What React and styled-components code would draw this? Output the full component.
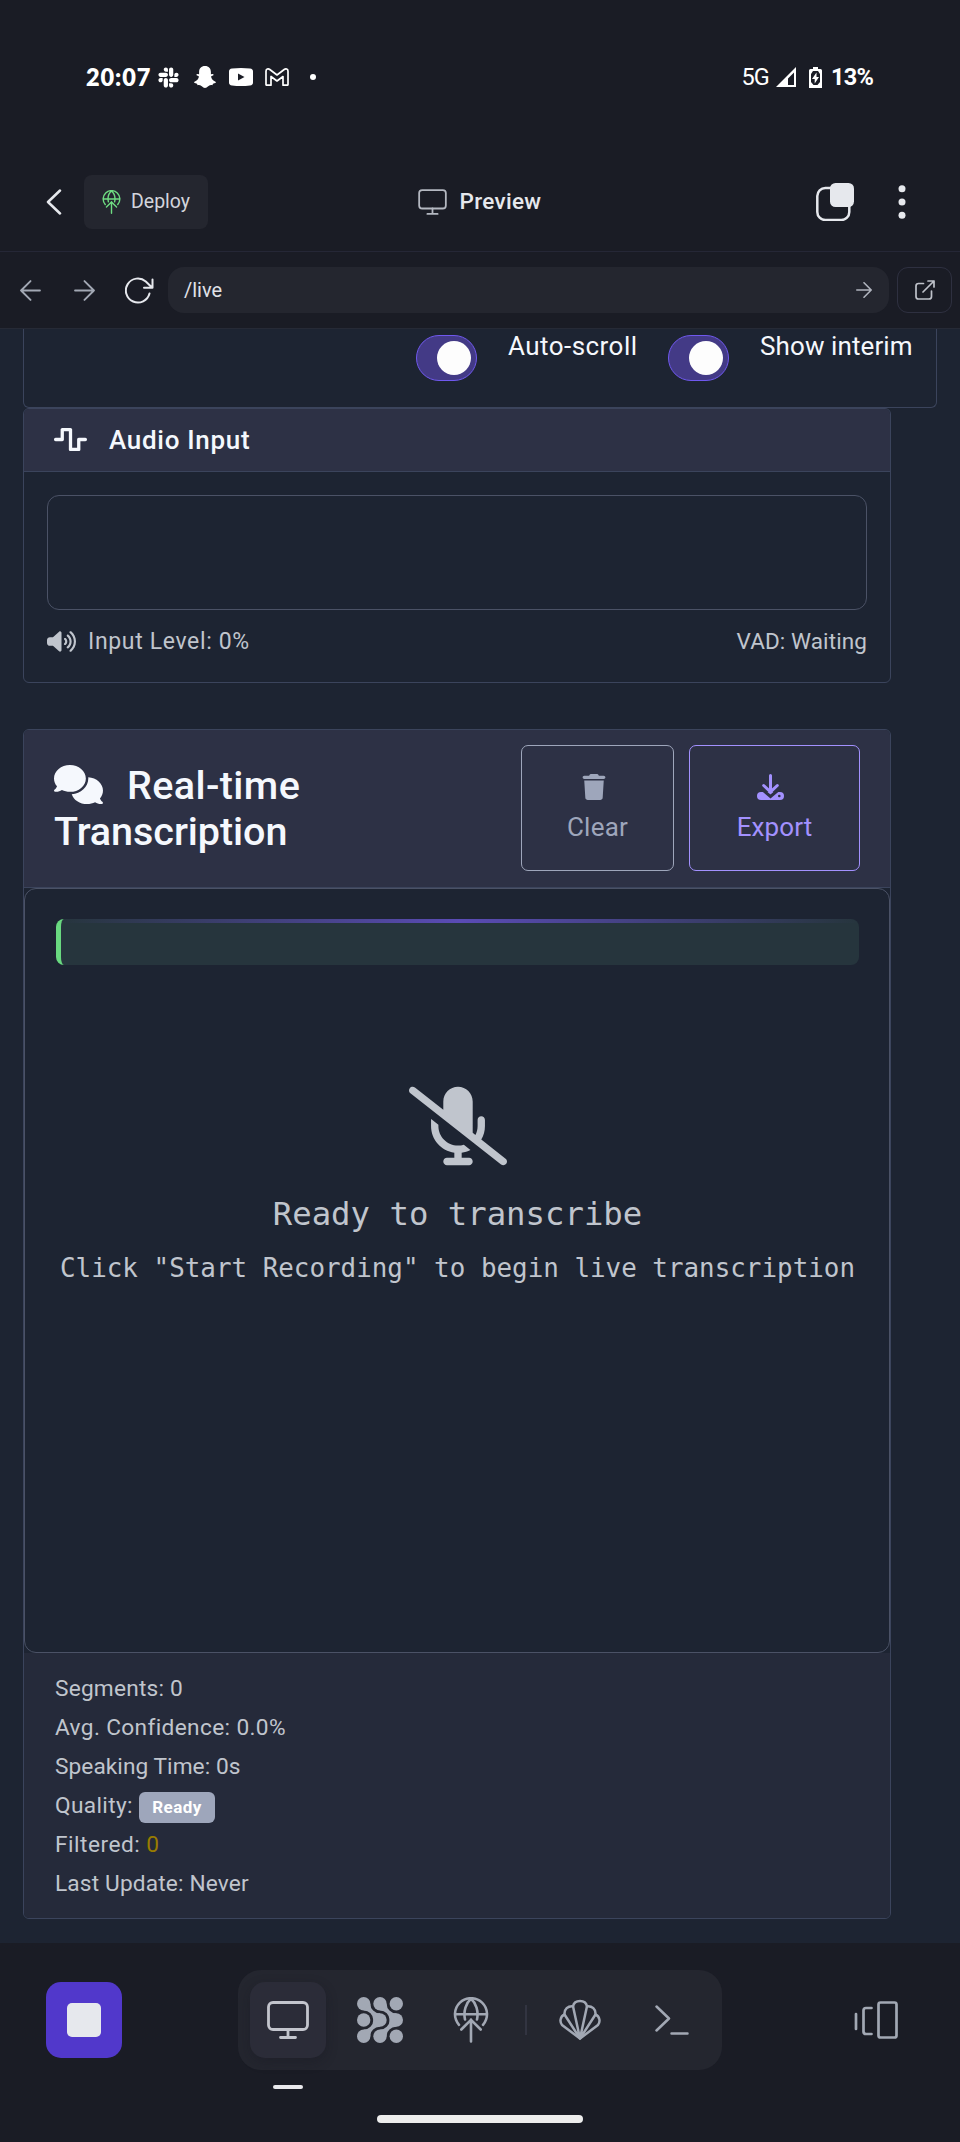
import React from "react";
import styled, { createGlobalStyle } from "styled-components";
import { FaSlack, FaComments, FaVolumeHigh, FaMicrophoneSlash, FaTrash, FaWaveSquare } from "react-icons/fa6";

const c = {
  chrome: "#1a1c25",
  raised: "#24262f",
  page: "#1d2432",
  head: "#2d3145",
  foot: "#252a3a",
  line: "#3b445c",
  inner: "#4b5266",
  text: "#f5f8fd",
  soft: "#c0c5cd",
  muted: "#a2a8b4",
};

const Global = createGlobalStyle`
  * { box-sizing: border-box; }
  body { margin: 0; background: ${c.chrome}; }
  button { font: inherit; padding: 0; border: 0; background: none; color: inherit; }
  svg { display: block; flex: none; }
`;
const Screen = styled.div`
  width: 960px;
  height: 2142px;
  overflow: hidden;
  display: flex;
  flex-direction: column;
  background: ${c.chrome};
  font-family: Roboto, sans-serif;
  color: ${c.text};
`;
const Label = styled.span`
  white-space: nowrap;
  font-size: ${(p) => p.$size}px;
  font-weight: ${(p) => p.$weight || 400};
  letter-spacing: ${(p) => p.$track || 0}px;
`;

/* status bar */
const StatusBar = styled.div`
  height: 154px;
  flex: none;
  display: flex;
  align-items: center;
  justify-content: space-between;
  padding: 0 87px 0 86px;
  color: #fff;
`;
const StatusGroup = styled.div`
  display: flex;
  align-items: center;
`;
const StatusSlot = styled.span`
  margin-left: ${(p) => p.$gap}px;
`;
const Clock = styled(Label)`
  font-family: Lato, sans-serif;
  width: 65px;
`;

/* top header */
const Header = styled.header`
  height: 98px;
  flex: none;
  display: grid;
  grid-template-columns: 1fr auto 1fr;
  align-items: center;
  padding: 0 54px 2px 46px;
  border-bottom: 1px solid #252736;
  color: #e6e8ed;
`;
const HeaderSide = styled.div`
  display: flex;
  align-items: center;
  justify-content: ${(p) => (p.$end ? "flex-end" : "flex-start")};
  gap: ${(p) => p.$gap}px;
`;
const DeployButton = styled.button`
  display: flex;
  align-items: center;
  gap: 10px;
  width: 124px;
  height: 54px;
  padding-left: 18px;
  border-radius: 8px;
  background: ${c.raised};
  color: #d3d5dc;
`;
const Title = styled.div`
  display: flex;
  align-items: center;
  gap: 13px;
  padding: 0 0 1px 7px;
  svg { color: #b4b8c1; margin-top: 2px; }
`;

/* address bar */
const AddressBar = styled.div`
  height: 77px;
  flex: none;
  display: flex;
  align-items: center;
  padding: 0 8px 0 20px;
  border-bottom: 1px solid #262a36;
`;
const NavButtons = styled.div`
  display: flex;
  align-items: center;
  width: 148px;
  gap: 33px;
  color: ${c.muted};
`;
const Reload = styled.svg`
  margin-left: -3px;
`;
const AddressField = styled.div`
  flex: 1;
  height: 46px;
  display: flex;
  align-items: center;
  justify-content: space-between;
  padding: 0 17px 0 16px;
  border-radius: 16px;
  background: ${c.raised};
  color: #e0e2e8;
  svg { color: #b0b4be; }
`;
const OpenButton = styled.button`
  width: 55px;
  height: 46px;
  margin-left: 8px;
  display: flex;
  align-items: center;
  justify-content: center;
  border: 1px solid #2e3040;
  border-radius: 11px;
  color: #bfc2ca;
`;

/* page */
const Viewport = styled.main`
  height: 1614px;
  flex: none;
  padding-left: 23px;
  background: ${c.page};
`;
const Options = styled.section`
  width: 914px;
  height: 79px;
  display: flex;
  align-items: flex-start;
  justify-content: flex-end;
  padding: 1px 24px 0 0;
  border: 1px solid ${c.line};
  border-top: 0;
  border-radius: 0 0 6px 6px;
`;
const Toggle = styled.button`
  width: 61px;
  height: 46px;
  margin-top: 5px;
  padding: 0 5px;
  display: flex;
  align-items: center;
  justify-content: flex-end;
  border: 1px solid #7059ef;
  border-radius: 23px;
  background: #433a86;
`;
const Knob = styled.span`
  width: 34px;
  height: 34px;
  border-radius: 50%;
  background: #fdfdfd;
`;
const ToggleText = styled(Label)`
  line-height: 32px;
  width: ${(p) => p.$width}px;
  margin-left: 31px;
  margin-right: ${(p) => p.$after || 0}px;
`;
const Card = styled.section`
  width: 868px;
  height: ${(p) => p.$height}px;
  margin-bottom: 46px;
  display: flex;
  flex-direction: column;
  border: 1px solid ${c.line};
  border-radius: 6px;
  overflow: hidden;
`;
const CardHeader = styled.div`
  height: ${(p) => p.$height}px;
  flex: none;
  display: flex;
  align-items: center;
  justify-content: space-between;
  padding: 0 30px;
  border-bottom: 1px solid ${c.line};
  background: ${c.head};
`;
const CardTitle = styled.div`
  display: flex;
  align-items: center;
  gap: 22px;
  svg { margin-top: -2px; }
`;
const BigTitle = styled.h2`
  margin: 0;
  font-size: 39.5px;
  line-height: 46px;
  font-weight: 500;
`;
const TitleLine = styled.div`
  display: flex;
  align-items: center;
  gap: 24px;
  letter-spacing: ${(p) => p.$track}px;
  svg { margin-top: -3px; }
`;
const Actions = styled.div`
  display: flex;
  gap: 15px;
  padding-bottom: 2px;
`;
const ActionButton = styled.button`
  width: ${(p) => p.$width}px;
  height: 126px;
  padding-top: 28px;
  display: flex;
  flex-direction: column;
  align-items: center;
  border: 1px solid currentColor;
  border-radius: 7px;
  color: ${(p) => p.$color};
  svg { margin-right: 8px; }
  span { line-height: 34px; margin-top: 10px; }
`;
const AudioBody = styled.div`
  padding: 23px 23px 0;
  color: ${c.soft};
`;
const Waveform = styled.div`
  height: 115px;
  border: 1px solid ${c.inner};
  border-radius: 12px;
`;
const LevelRow = styled.div`
  height: 40px;
  margin-top: 11px;
  display: flex;
  align-items: center;
  justify-content: space-between;
`;
const Level = styled.div`
  display: flex;
  align-items: center;
  gap: 12px;
`;
const Transcript = styled.div`
  height: 765px;
  flex: none;
  padding: 30px 30px 0 31px;
  border: 1px solid ${c.inner};
  border-radius: 12px;
`;
const LiveLine = styled.div`
  height: 46px;
  border-left: 5px solid #69d980;
  border-radius: 8px;
  background: #26353d;
  overflow: hidden;
`;
const Shimmer = styled.div`
  height: 4px;
  background: linear-gradient(90deg, transparent, #5a4bb5, transparent);
`;
const Empty = styled.div`
  margin: 112px -20px 0;
  display: flex;
  flex-direction: column;
  align-items: center;
  font-family: "DejaVu Sans Mono", monospace;
  color: ${c.soft};
`;
const EmptyTitle = styled(Label)`
  line-height: 50px;
  margin-top: 14px;
`;
const EmptyHint = styled(Label)`
  line-height: 40px;
  margin-top: 9px;
`;
const Stats = styled.div`
  flex: 1;
  padding: 16px 30px 0 31px;
  background: ${c.foot};
  color: ${c.soft};
`;
const Stat = styled.div`
  height: 39px;
  display: flex;
  align-items: center;
  gap: 6px;
`;
const Badge = styled.span`
  width: 76px;
  height: 31px;
  margin-top: 4px;
  border-radius: 6px;
  background: #9ea6bb;
  color: #fff;
  font: 700 17px/31px Roboto, sans-serif;
  letter-spacing: 0.4px;
  text-align: center;
`;
const Filtered = styled(Label)`
  color: #987c00;
`;

/* bottom dock */
const BottomBar = styled.nav`
  height: 127px;
  flex: none;
  display: flex;
  align-items: center;
  padding: 27px 62px 0 46px;
`;
const StopButton = styled.button`
  width: 76px;
  height: 76px;
  display: flex;
  align-items: center;
  justify-content: center;
  border-radius: 15px;
  background: #5138cb;
`;
const StopMark = styled.span`
  width: 34px;
  height: 34px;
  border-radius: 5px;
  background: #e6e8ed;
`;
const Dock = styled.div`
  width: 484px;
  height: 100px;
  margin-left: 116px;
  display: flex;
  align-items: center;
  padding: 0 12px;
  border-radius: 23px;
  background: ${c.raised};
  color: ${c.muted};
`;
const Tab = styled.button`
  width: 76px;
  height: 76px;
  margin-right: ${(p) => p.$after ?? 16}px;
  display: flex;
  align-items: center;
  justify-content: center;
  border-radius: 15px;
  color: ${(p) => (p.$active ? "#c3c5cd" : "inherit")};
  background: ${(p) => (p.$active ? "#2b2c38" : "transparent")};
  box-shadow: ${(p) => (p.$active ? "0 4px 12px rgba(20, 20, 30, 0.3)" : "none")};
`;
const Divider = styled.i`
  width: 2px;
  height: 30px;
  margin-right: 15px;
  background: #323441;
`;
const Switcher = styled.button`
  margin-left: auto;
  color: ${c.muted};
`;
const Indicator = styled.div`
  width: 30px;
  height: 4px;
  flex: none;
  margin: 15px 0 0 273px;
  border-radius: 2px;
  background: #e9e9ed;
`;
const HomeBar = styled.div`
  width: 206px;
  height: 8px;
  flex: none;
  margin: 26px 0 0 377px;
  border-radius: 4px;
  background: #ededed;
`;

const line = { fill: "none", stroke: "currentColor", strokeLinecap: "round", strokeLinejoin: "round" };

const Monitor = ({ w, h, sw }) => (
  <svg width={w} height={h} viewBox="0 0 42 38" {...line} strokeWidth={sw}>
    <rect x="1.5" y="1.5" width="39" height="27" rx="4.5" />
    <path d="M21 28.5v8M13.5 36.5h15" />
  </svg>
);
const GlobeUp = ({ w, h, color, sw = 2.6 }) => (
  <svg width={w} height={h} viewBox="0 0 36 46" {...line} stroke={color || "currentColor"} strokeWidth={sw}>
    <path d="M6 27.8A16 16 0 1 1 30 27.8M2.2 17.2h31.6M12 22.5C10.2 14 13 6 18 1.8c5 4.2 7.8 12.2 6 20.7" />
    <path d="M18 44.5v-22M8.3 32.5 18 22.8l9.7 9.7" />
  </svg>
);
const Arrow = ({ size, back, sw = 1.8 }) => (
  <svg width={size} height={size} viewBox="0 0 20 20" {...line} strokeWidth={sw}>
    {back ? <path d="M19 10H1M10 1 1 10l9 9" /> : <path d="M1 10h18M10 1l9 9-9 9" />}
  </svg>
);

const dots = [6.7, 23, 39.3];
const Molecules = () => (
  <svg width="46" height="46" viewBox="0 0 46 46" fill="currentColor">
    {dots.map((y) => dots.map((x) => <circle key={x + "-" + y} cx={x} cy={y} r="6.7" />))}
    <path d="M13.4 6.7A9.4 9.4 0 0 0 23 16.3V29.7A9.4 9.4 0 0 0 13.4 39.3L6.7 32.6A9.6 9.6 0 0 0 6.7 13.4Z" />
    <path d="M29.7 6.7A9.4 9.4 0 0 0 39.3 16.3V29.7A9.4 9.4 0 0 0 29.7 39.3L23 32.6A9.6 9.6 0 0 0 23 13.4Z" />
  </svg>
);

const Shell = () => (
  <svg width="42" height="42" viewBox="0 0 42 42" {...line} strokeWidth="2.5">
    <path d="M21 39.5 3 26C.5 23 1 17.5 5.5 15.5 5 10 9 6.7 14 7.2 15.5 .2 26.5 .2 28 7.2 33 6.7 37 10 36.5 15.5 41 17.5 41.5 23 39 26Z" />
    <path d="M21 39.5 5.5 15.5M21 39.5 14 7.2M21 39.5 28 7.2M21 39.5 36.5 15.5" />
  </svg>
);

export default function App() {
  return (
    <Screen>
      <Global />
      <StatusBar>
        <StatusGroup>
          <Clock $size={23.5} $weight={800} $track={0.9}>20:07</Clock>
          <StatusSlot $gap={6}><FaSlack size={23} /></StatusSlot>
          <StatusSlot $gap={14}>
            <svg width="22" height="22" viewBox="0 0 22 22" fill="#fff">
              <path d="M11 0c3.800 0 5.900 2.500 5.900 6v2.300l1.700-.4c1.200.2 1.300 1.200.3 1.700l-1.900 1c.6 2.500 2 4.200 4.500 5.200 1 .5.600 1.400-2.500 2l-.6 1.400c-1.500-.3-2.700-.1-3.800.9C13 21.400 12.200 22 11 22s-2-.6-3.600-1.900c-1.100-1-2.300-1.200-3.800-.9L3 17.800c-3.100-.6-3.500-1.500-2.500-2C3 14.800 4.400 13.100 5 10.600l-1.900-1c-1-.5-.9-1.500.3-1.700l1.700.4V6C5.100 2.500 7.200 0 11 0Z" />
            </svg>
          </StatusSlot>
          <StatusSlot $gap={13}>
            <svg width="24" height="18" viewBox="0 0 24 18">
              <path fill="#fff" fillRule="evenodd" d="M3 .5Q12-.5 21 .5q3 .3 3 3v11q0 2.700-3 3-9 1-18 0-3-.3-3-3v-11q0-2.700 3-3ZM9 5.500v7l6.500-3.500Z" />
            </svg>
          </StatusSlot>
          <StatusSlot $gap={12}>
            <svg width="24" height="18" viewBox="0 0 24 18" fill="none" stroke="#fff" strokeWidth="1.7" strokeLinejoin="round">
              <path d="M1 16.500V3.200C1 1 3.200.3 4.800 1.500L12 7l7.200-5.500C20.800.3 23 1 23 3.200v13.300q0 .7-.7.7H18V8.500L12 13 6 8.500v8.700H1.700q-.7 0-.7-.7Z" />
            </svg>
          </StatusSlot>
          <StatusSlot $gap={21}>
            <svg width="6" height="6" viewBox="0 0 6 6"><circle cx="3" cy="3" r="3" fill="#fff" /></svg>
          </StatusSlot>
        </StatusGroup>
        <StatusGroup>
          <Label $size={23.5} $track={-0.8}>5G</Label>
          <StatusSlot $gap={7}>
            <svg width="20" height="20" viewBox="0 0 20 20">
              <path fill="#fff" fillRule="evenodd" d="M20 0v20H0ZM18 5.500 12 11.500V18h6Z" />
            </svg>
          </StatusSlot>
          <StatusSlot $gap={13}>
            <svg width="13" height="21" viewBox="0 0 13 21">
              <path fill="#fff" d="M4 0h5v2h2.500Q13 2 13 3.500V21H0V3.500Q0 2 1.500 2H4Z" />
              <path fill={c.chrome} d="M4 4h5l2 3v8l-2.500 3h-4L2 15V7Z" />
              <path fill="#fff" d="M7.500 5.500 3 12h2.700v4.500L10 10H7.500Z" />
            </svg>
          </StatusSlot>
          <StatusSlot $gap={9}><Label $size={23.5} $weight={700} $track={-0.8}>13%</Label></StatusSlot>
        </StatusGroup>
      </StatusBar>

      <Header>
        <HeaderSide $gap={22}>
          <svg width="16" height="26" viewBox="0 0 16 26" {...line} strokeWidth="2.5"><path d="M14 1.500 2 13l12 11.500" /></svg>
          <DeployButton>
            <GlobeUp w={19} h={24} color="#6fdc82" sw={2.7} />
            <Label $size={19.5}>Deploy</Label>
          </DeployButton>
        </HeaderSide>
        <Title>
          <Monitor w={29} h={26} sw={2.6} />
          <Label $size={22.5} $weight={500} $track={0.3}>Preview</Label>
        </Title>
        <HeaderSide $end $gap={44}>
          <svg width="38" height="38" viewBox="0 0 38 38">
            <rect x="1.300" y="5" width="32" height="32" rx="8" fill="none" stroke="#e6e8ed" strokeWidth="2.5" />
            <rect x="14" y="0" width="24" height="24" rx="5.500" fill="#e6e8ed" />
          </svg>
          <svg width="8" height="34" viewBox="0 0 8 34" fill="#e6e8ed">
            <circle cx="4" cy="3.700" r="3.500" /><circle cx="4" cy="17" r="3.500" /><circle cx="4" cy="30.300" r="3.500" />
          </svg>
        </HeaderSide>
      </Header>

      <AddressBar>
        <NavButtons>
          <Arrow size={21} back />
          <Arrow size={21} />
          <Reload width="29" height="27" viewBox="0 0 29 27" {...line} stroke="#e6e8ed" strokeWidth="2">
            <path d="M24.500 16.500A12 12 0 1 1 20.800 4.500L27 10.500M27.500 2.500v8.300H19" />
          </Reload>
        </NavButtons>
        <AddressField>
          <Label $size={20}>/live</Label>
          <Arrow size={16} sw={2} />
        </AddressField>
        <OpenButton>
          <svg width="20" height="20" viewBox="0 0 20 20" {...line} strokeWidth="1.7">
            <path d="M8.500 3.500H3.500Q1 3.500 1 6v10.500Q1 19 3.500 19H14q2.500 0 2.500-2.500V11M8 12 19 1M13 1h6v6" />
          </svg>
        </OpenButton>
      </AddressBar>

      <Viewport>
        <Options>
          <Toggle><Knob /></Toggle>
          <ToggleText $size={26} $width={130} $track={0.45} $after={30}>Auto-scroll</ToggleText>
          <Toggle><Knob /></Toggle>
          <ToggleText $size={26} $width={152} $track={0.1}>Show interim</ToggleText>
        </Options>

        <Card $height={275}>
          <CardHeader $height={63}>
            <CardTitle>
              <FaWaveSquare size={33} />
              <Label $size={26} $weight={500} $track={0.7}>Audio Input</Label>
            </CardTitle>
          </CardHeader>
          <AudioBody>
            <Waveform />
            <LevelRow>
              <Level>
                <FaVolumeHigh size={29} />
                <Label $size={23} $track={0.65}>Input Level: 0%</Label>
              </Level>
              <Label $size={22.5} $track={0.1}>VAD: Waiting</Label>
            </LevelRow>
          </AudioBody>
        </Card>

        <Card $height={1190}>
          <CardHeader $height={158}>
            <BigTitle>
              <TitleLine $track={0.4}><FaComments size={49} />Real-time</TitleLine>
              <TitleLine $track={-0.05}>Transcription</TitleLine>
            </BigTitle>
            <Actions>
              <ActionButton $width={153} $color="#9ea6bb">
                <FaTrash size={26} />
                <Label $size={26} $track={0.2}>Clear</Label>
              </ActionButton>
              <ActionButton $width={171} $color="#a391ff">
                <svg width="27" height="26" viewBox="0 0 27 26">
                  <rect x="0" y="18" width="27" height="8" rx="4" fill="currentColor" />
                  <path d="M4 14.500 13.500 22.500 23 14.500" fill="none" stroke={c.head} strokeWidth="3" />
                  <path d="M13.500 1.600v16M6.700 11.500l6.800 6.400 6.800-6.400" {...line} strokeWidth="3" />
                  <circle cx="22.300" cy="22" r="1.300" fill={c.head} />
                </svg>
                <Label $size={26} $track={0.1}>Export</Label>
              </ActionButton>
            </Actions>
          </CardHeader>
          <Transcript>
            <LiveLine><Shimmer /></LiveLine>
            <Empty>
              <FaMicrophoneSlash size={98} />
              <EmptyTitle $size={32.3}>Ready to transcribe</EmptyTitle>
              <EmptyHint $size={25.9}>Click "Start Recording" to begin live transcription</EmptyHint>
            </Empty>
          </Transcript>
          <Stats>
            <Stat><Label $size={22.7} $track={0.2}>Segments: 0</Label></Stat>
            <Stat><Label $size={22.7} $track={0.35}>Avg. Confidence: 0.0%</Label></Stat>
            <Stat><Label $size={22.7} $track={0.05}>Speaking Time: 0s</Label></Stat>
            <Stat><Label $size={22.7} $track={0.35}>Quality:</Label><Badge>Ready</Badge></Stat>
            <Stat><Label $size={22.7} $track={0.5}>Filtered:</Label><Filtered $size={22.7}>0</Filtered></Stat>
            <Stat><Label $size={22.7} $track={0.15}>Last Update: Never</Label></Stat>
          </Stats>
        </Card>
      </Viewport>

      <BottomBar>
        <StopButton><StopMark /></StopButton>
        <Dock>
          <Tab $active><Monitor w={42} h={38} sw={2.8} /></Tab>
          <Tab $after={15}><Molecules /></Tab>
          <Tab><GlobeUp w={36} h={46} /></Tab>
          <Divider />
          <Tab><Shell /></Tab>
          <Tab $after={0}>
            <svg width="34" height="30" viewBox="0 0 34 30" {...line} strokeWidth="2.5"><path d="M1.500 1.500 14 13.500 1.500 25.500M16.500 28.500H32.500" /></svg>
          </Tab>
        </Dock>
        <Switcher>
          <svg width="44" height="38" viewBox="0 0 44 38" {...line} strokeWidth="2.7">
            <path d="M2 13v15M17.500 7H12q-2.500 0-2.500 2.500v21Q9.500 33 12 33h5.500" />
            <rect x="24.500" y="1.500" width="18" height="35" rx="2" />
          </svg>
        </Switcher>
      </BottomBar>
      <Indicator />
      <HomeBar />
    </Screen>
  );
}
